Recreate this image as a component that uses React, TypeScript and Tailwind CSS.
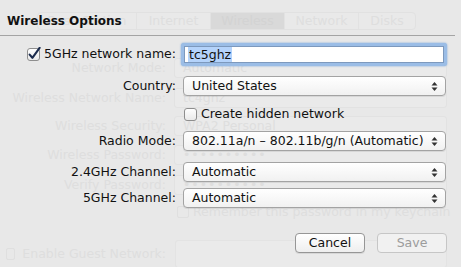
import React from 'react';

const ghostText = 'text-[#dedede]';

function Arrows() {
  return (
    <svg width="7" height="11" viewBox="0 0 7 11" className="shrink-0">
      <path d="M3.5 1 L6.5 4.5 L0.5 4.5 Z" fill="#333" />
      <path d="M3.5 10 L6.5 6.5 L0.5 6.5 Z" fill="#333" />
    </svg>
  );
}

function Popup({ label }: { label: string }) {
  return (
    <div className="ml-[7px] mr-[15px] h-[20px] flex-1 flex items-center justify-between pl-[8px] pr-[7px] rounded-[4px] border border-[#a3a3a3] bg-gradient-to-b from-white to-[#f1f1f1] shadow-[0_1px_0_rgba(0,0,0,0.08)]">
      <span className="text-[12.5px] text-[#111] leading-none whitespace-nowrap">{label}</span>
      <Arrows />
    </div>
  );
}

function CheckBox({ checked }: { checked?: boolean }) {
  return (
    <svg width="15" height="15" viewBox="0 0 15 15" className="shrink-0">
      <defs>
        <linearGradient id="cb" x1="0" y1="0" x2="0" y2="1">
          <stop offset="0" stopColor="#ffffff" />
          <stop offset="1" stopColor="#e9e9e9" />
        </linearGradient>
      </defs>
      <rect x="1.5" y="1.5" width="12" height="12" rx="2.5" fill="url(#cb)" stroke="#8e8e8e" />
      {checked && (
        <path
          d="M3.6 7.6 L6.4 10.8 L13.6 0.8"
          fill="none"
          stroke="#1c2c4e"
          strokeWidth="2.1"
          strokeLinecap="round"
          strokeLinejoin="round"
        />
      )}
    </svg>
  );
}

function GhostRow({ label, value, top, pwd }: { label: string; value: string; top: string; pwd?: boolean }) {
  return (
    <div className={`flex items-center h-[20px] ${top}`}>
      <span className={`w-[166px] shrink-0 whitespace-nowrap text-right text-[12.5px] ${ghostText}`}>{label}</span>
      <div className="ml-[8px] mr-[14px] flex-1 h-[20px] flex items-center pl-[8px] rounded-[3px] border border-[#e2e2e2] bg-[#eaeaea]">
        <span className={`text-[12.5px] whitespace-nowrap ${pwd ? 'tracking-[1px]' : ''} ${ghostText}`}>{value}</span>
      </div>
    </div>
  );
}

function GhostWindow() {
  const tabs = ['Base Station', 'Internet', 'Wireless', 'Network', 'Disks'];
  return (
    <div className="flex flex-col">
      <div className="mt-[12px] ml-[37px] flex h-[18px] w-[379px] rounded-[4px] border border-[#e1e1e1] bg-[#e9e9e9] overflow-hidden">
        {tabs.map((t, i) => (
          <div
            key={t}
            className={`flex items-center justify-center text-[12.5px] whitespace-nowrap ${
              i === 0 ? 'w-[98px]' : i === 4 ? 'flex-1' : 'w-[74px]'
            } ${i === 2 ? 'bg-[#d9d9d9] text-[#d3d3d3]' : ghostText} ${i > 0 ? 'border-l border-[#e2e2e2]' : ''}`}
          >
            {t}
          </div>
        ))}
      </div>
      <GhostRow top="mt-[28px]" label="Network Mode:" value="Automatic" />
      <GhostRow top="mt-[10px]" label="Wireless Network Name:" value="tc4ghz" />
      <GhostRow top="mt-[8px]" label="Wireless Security:" value="WPA2 Personal" />
      <GhostRow top="mt-[9px]" label="Wireless Password:" value="••••••••••" pwd />
      <GhostRow top="mt-[10px]" label="Verify Password:" value="••••••••••" pwd />
      <div className="mt-[10px] h-[14px] ml-[177px] flex items-center gap-[4px]">
        <div className="w-[12px] h-[12px] rounded-[2px] border border-[#dfdfdf]" />
        <span className={`text-[12.5px] whitespace-nowrap ${ghostText}`}>Remember this password in my keychain</span>
      </div>
      <div className="mt-[21px] flex items-center">
        <div className="w-[166px] shrink-0 flex items-center gap-[7px] pl-[6px]">
          <div className="w-[12px] h-[12px] rounded-[2px] border border-[#dfdfdf]" />
          <span className={`text-[12.5px] whitespace-nowrap ${ghostText}`}>Enable Guest Network:</span>
        </div>
        <div className="ml-[9px] mr-[14px] flex-1 h-[28px] rounded-[3px] border border-[#e3e3e3] bg-[#eaeaea]" />
      </div>
    </div>
  );
}

function Sheet() {
  return (
    <div className="absolute inset-0 flex flex-col">
      <div className="h-[36px] mr-[6px] border-b border-[#a4a4a4] flex items-start pl-[7px] pt-[13px]">
        <span className="text-[12px] font-bold text-[#111] leading-[16px] whitespace-nowrap">Wireless Options</span>
      </div>

      <div className="mt-[7px] flex items-center h-[23px]">
        <div className="w-[176px] shrink-0 flex items-center justify-end gap-[3px]">
          <CheckBox checked />
          <span className="text-[12.5px] text-[#111] whitespace-nowrap">5GHz network name:</span>
        </div>
        <div className="ml-[5px] mr-[14px] flex-1 h-[23px] rounded-[3px] p-[3px] bg-[#9bbde6] shadow-[0_0_2px_#6f9fd8]">
          <div className="h-full bg-white border border-[#7d99bd] flex items-center pl-[3px]">
            <span className="text-[12.5px] text-[#111] bg-[#b4d3fb] px-[1px] leading-[15px]">tc5ghz</span>
          </div>
        </div>
      </div>

      <div className="mt-[10px] flex items-center">
        <span className="w-[176px] shrink-0 text-right text-[12.5px] text-[#111] whitespace-nowrap">Country:</span>
        <Popup label="United States" />
      </div>

      <div className="mt-[8px] flex items-center h-[20px]">
        <div className="ml-[183px] flex items-center gap-[3px]">
          <CheckBox />
          <span className="text-[12.5px] text-[#111] whitespace-nowrap">Create hidden network</span>
        </div>
      </div>

      <div className="mt-[7px] flex items-center">
        <span className="w-[176px] shrink-0 text-right text-[12.5px] text-[#111] whitespace-nowrap">Radio Mode:</span>
        <Popup label="802.11a/n – 802.11b/g/n (Automatic)" />
      </div>

      <div className="mt-[11px] flex items-center">
        <span className="w-[176px] shrink-0 text-right text-[12.5px] text-[#111] whitespace-nowrap">2.4GHz Channel:</span>
        <Popup label="Automatic" />
      </div>

      <div className="mt-[6px] flex items-center">
        <span className="w-[176px] shrink-0 text-right text-[12.5px] text-[#111] whitespace-nowrap">5GHz Channel:</span>
        <Popup label="Automatic" />
      </div>

      <div className="mt-[25px] mr-[14px] flex justify-end gap-[12px]">
        <button className="w-[70px] h-[20px] rounded-[4px] border border-[#969696] bg-gradient-to-b from-white to-[#eeeeee] text-[12.5px] text-[#111] leading-none shadow-[0_1px_0_rgba(0,0,0,0.08)]">
          Cancel
        </button>
        <button className="w-[70px] h-[20px] rounded-[4px] border border-[#c6c6c6] bg-[#f1f1f1] text-[12.5px] text-[#9c9c9c] leading-none">
          Save
        </button>
      </div>
    </div>
  );
}

export default function App() {
  return (
    <div className="relative w-[461px] h-[267px] overflow-hidden bg-[#e8e8e8] font-['DejaVu_Sans',sans-serif]">
      <GhostWindow />
      <Sheet />
    </div>
  );
}
